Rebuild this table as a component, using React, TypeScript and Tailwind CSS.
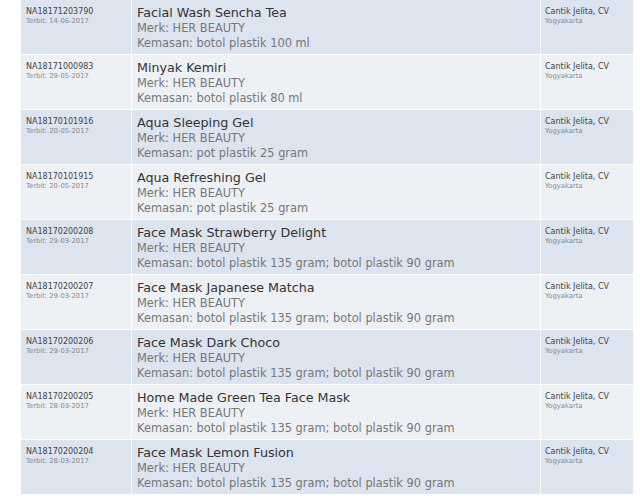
import React from "react";

type Row = { code: string; date: string; name: string; pack: string };

const rows: Row[] = [
  { code: "NA18171203790", date: "14-06-2017", name: "Facial Wash Sencha Tea", pack: "botol plastik 100 ml" },
  { code: "NA18171000983", date: "29-05-2017", name: "Minyak Kemiri", pack: "botol plastik 80 ml" },
  { code: "NA18170101916", date: "20-05-2017", name: "Aqua Sleeping Gel", pack: "pot plastik 25 gram" },
  { code: "NA18170101915", date: "20-05-2017", name: "Aqua Refreshing Gel", pack: "pot plastik 25 gram" },
  { code: "NA18170200208", date: "29-03-2017", name: "Face Mask Strawberry Delight", pack: "botol plastik 135 gram; botol plastik 90 gram" },
  { code: "NA18170200207", date: "29-03-2017", name: "Face Mask Japanese Matcha", pack: "botol plastik 135 gram; botol plastik 90 gram" },
  { code: "NA18170200206", date: "29-03-2017", name: "Face Mask Dark Choco", pack: "botol plastik 135 gram; botol plastik 90 gram" },
  { code: "NA18170200205", date: "28-03-2017", name: "Home Made Green Tea Face Mask", pack: "botol plastik 135 gram; botol plastik 90 gram" },
  { code: "NA18170200204", date: "28-03-2017", name: "Face Mask Lemon Fusion", pack: "botol plastik 135 gram; botol plastik 90 gram" },
];

export default function App() {
  return (
    <div className="w-[640px] h-[496px] bg-white overflow-hidden" style={{ fontFamily: '"DejaVu Sans", Verdana, sans-serif' }}>
      <div className="ml-[21px] w-[612px] flex flex-col gap-px">
        {rows.map((r, i) => {
          const bg = i % 2 === 0 ? "bg-[#dbe4ef]" : "bg-[#edf1f6]";
          return (
            <div key={r.code} className="flex h-[54px] gap-px">
              <div className={`w-[110px] ${bg} pl-[5px] pt-[7px]`}>
                <div className="text-[8px] leading-[10px] text-[#444]">{r.code}</div>
                <div className="text-[6.8px] leading-[8px] text-[#888]">Terbit: {r.date}</div>
              </div>
              <div className={`flex-1 ${bg} pl-[5px] pt-[5px]`}>
                <div className="text-[12.7px] leading-[16px] text-[#333]">{r.name}</div>
                <div className="text-[11.4px] leading-[15px] text-[#777]">Merk: HER BEAUTY</div>
                <div className="text-[11.4px] leading-[15px] text-[#777]">Kemasan: {r.pack}</div>
              </div>
              <div className={`w-[92px] ${bg} pl-[4px] pt-[7px]`}>
                <div className="text-[8px] leading-[10px] text-[#444]">Cantik Jelita, CV</div>
                <div className="text-[6.8px] leading-[8px] text-[#888]">Yogyakarta</div>
              </div>
            </div>
          );
        })}
      </div>
    </div>
  );
}
